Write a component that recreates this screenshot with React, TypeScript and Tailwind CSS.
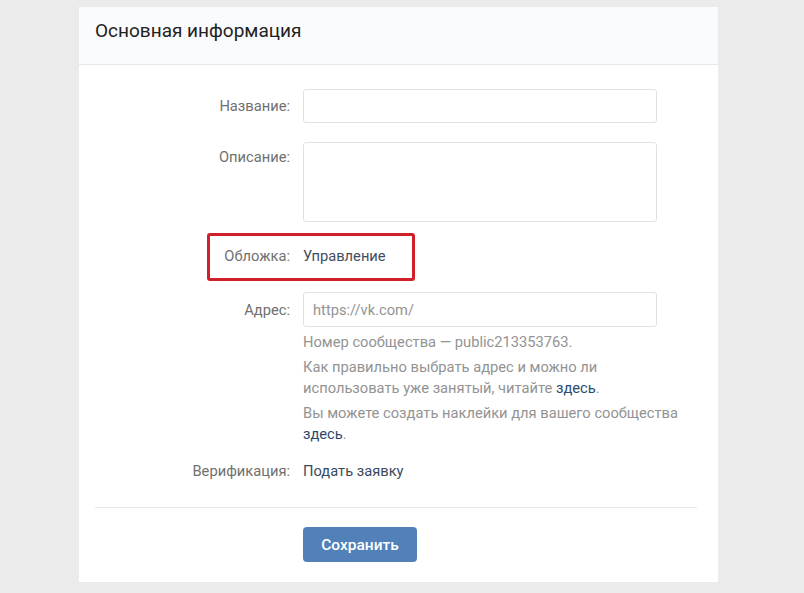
import React from "react";

export default function App() {
  return (
    <div
      className="w-[804px] h-[593px] bg-[#ebebeb] overflow-hidden pt-[7px]"
      style={{ fontFamily: "Roboto, 'Open Sans', Arial, sans-serif" }}
    >
      <div className="ml-[79px] w-[639px] h-[575px] bg-white flex flex-col">
        <div className="h-[58px] bg-[#fafbfc] border-b border-[#e7e8ec] flex items-center pl-[16px] pb-[8px]">
          <span className="text-[19px] text-[#222222]">Основная информация</span>
        </div>
        <div className="px-[16px] pt-[24px] flex flex-col text-[14.7px] leading-[18px]">
          <div className="flex gap-[13px]">
            <div className="w-[195px] text-right text-[#707070] pt-[8px]">Название:</div>
            <div className="w-[354px] h-[34px] border border-[#dfe1e5] rounded-[3px]" />
          </div>
          <div className="flex gap-[13px] mt-[19px]">
            <div className="w-[195px] text-right text-[#707070] pt-[6px]">Описание:</div>
            <div className="w-[354px] h-[80px] border border-[#dfe1e5] rounded-[3px]" />
          </div>
          <div className="flex gap-[13px] mt-[25px] relative">
            <div className="w-[195px] text-right text-[#707070]">Обложка:</div>
            <div className="text-[#3f4d60]">Управление</div>
            <div className="absolute left-[112px] top-[-14px] w-[208px] h-[48px] border-[3px] border-[#cf1f28] rounded-[3px]" />
          </div>
          <div className="flex gap-[13px] mt-[27px]">
            <div className="w-[195px] text-right text-[#707070] pt-[9px]">Адрес:</div>
            <div className="flex flex-col">
              <div className="w-[354px] h-[35px] border border-[#dfe1e5] rounded-[3px] flex items-center pl-[9px] text-[#939393]">
                https://vk.com/
              </div>
              <div className="w-[386px] text-[#939393] leading-[21px] mt-[5px]">
                <p>Номер сообщества — public213353763.</p>
                <p className="mt-[4px]">
                  Как правильно выбрать адрес и можно ли использовать уже занятый, читайте{" "}
                  <span className="text-[#2b4a6f]">здесь</span>.
                </p>
                <p className="mt-[4px]">
                  Вы можете создать наклейки для вашего сообщества{" "}
                  <span className="text-[#2b4a6f]">здесь</span>.
                </p>
              </div>
            </div>
          </div>
          <div className="flex gap-[13px] mt-[17px]">
            <div className="w-[195px] text-right text-[#707070]">Верификация:</div>
            <div className="text-[#3a4a60]">Подать заявку</div>
          </div>
          <div className="mt-[27px] h-px bg-[#e7e8ec] w-[602px]" />
          <div className="mt-[19px] pl-[208px]">
            <button className="w-[114px] h-[35px] bg-[#5181b8] rounded-[4px] text-white text-[15.5px] font-medium">
              Сохранить
            </button>
          </div>
        </div>
      </div>
    </div>
  );
}
